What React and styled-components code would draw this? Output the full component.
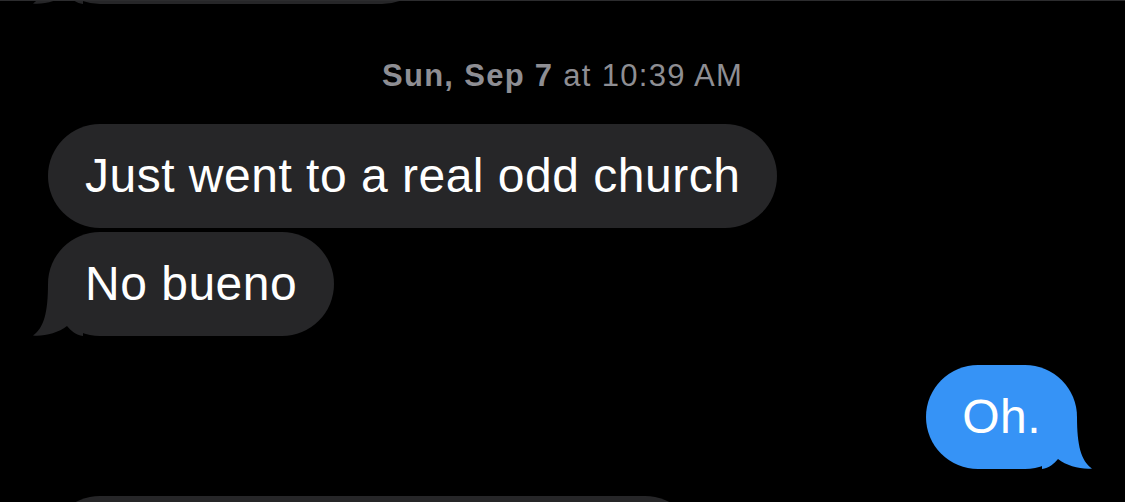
import React from 'react'
import styled, { createGlobalStyle } from 'styled-components'

const GlobalStyle = createGlobalStyle`
    html, body {
        margin: 0;
        padding: 0;
        background: #000;
    }
    body {
        font-family: "Liberation Sans", Arial, sans-serif;
        -webkit-font-smoothing: antialiased;
    }
`

const Thread = styled.div`
    width: 1125px;
    height: 502px;
    box-sizing: border-box;
    overflow: hidden;
    background: #000;
    border-top: 1px solid #2c2c2e;
    padding: 0 48px;
    display: flex;
    flex-direction: column;
    `

const Row = styled.div`
    display: flex;
    justify-content: ${({mine}) => mine ? 'flex-end' : 'flex-start'};
    margin-top: ${({gap}) => gap || 0}px;
    flex-shrink: 0;
    `

const Bubble = styled.div`
    position: relative;
    box-sizing: border-box;
    height: 104px;
    padding: 0 ${({mine}) => mine ? 36 : 37}px;
    border-radius: 52px;
    background: ${({mine}) => mine ? '#3693f6' : '#262628'};
    color: #fff;
    font-size: 48px;
    line-height: 104px;
    letter-spacing: 0.5px;
    white-space: nowrap;
    ${({width}) => width && `width: ${width}px;`}
    `

const Tail = styled.svg`
    position: absolute;
    bottom: 0;
    width: 50px;
    height: 52px;
    ${({mine}) => mine
        ? `right: -15px; transform: scaleX(-1);`
        : `left: -15px;`
    }
    `

const Stamp = styled.div`
    margin-top: 54px;
    height: 36px;
    line-height: 36px;
    text-align: center;
    color: #8e8e93;
    font-size: 31px;
    letter-spacing: 1.3px;
    flex-shrink: 0;

    b {
        font-weight: 600;
    }
    `

const TailShape = ({mine}) =>
    <Tail mine={mine} viewBox="0 0 50 52">
        <path
            fill={mine ? '#3693f6' : '#262628'}
            d="M15 0 C15 28 11 44 0 51.5 C11 52.5 25 49 34 42 C38 47 43 51 50 52 L50 0 Z"
        />
    </Tail>

const Message = ({mine, tail, gap, width, children}) =>
    <Row mine={mine} gap={gap}>
        <Bubble mine={mine} width={width}>
            {children}
            {tail && <TailShape mine={mine}/>}
        </Bubble>
    </Row>

export default class App extends React.Component{
    render(){
        return(
            <>
                <GlobalStyle/>
                <Thread>
                    {/* earlier message, scrolled off above: only its bottom edge shows */}
                    <Message tail gap={-101} width={386}/>
                    <Stamp><b>Sun, Sep 7</b> at 10:39 AM</Stamp>
                    <Message gap={30}>Just went to a real odd church</Message>
                    <Message tail gap={4}>No bueno</Message>
                    <Message mine tail gap={29}>Oh.</Message>
                    {/* next message, cut off below */}
                    <Message gap={27} width={649}/>
                </Thread>
            </>
        )
    }
}
